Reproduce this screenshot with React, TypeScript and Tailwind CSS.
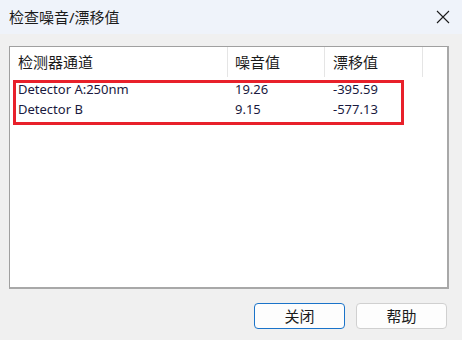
import React from 'react'

type Row = {
  channel: string
  noise: string
  drift: string
}

const rows: Row[] = [
  { channel: 'Detector A:250nm', noise: '19.26', drift: '-395.59' },
  { channel: 'Detector B', noise: '9.15', drift: '-577.13' },
]

const font = { fontFamily: '"Segoe UI", "Noto Sans", "Noto Sans CJK SC", sans-serif' }

const App: React.FC = () => {
  return (
    <div className="w-[462px] h-[340px] bg-[#f0f0f0] flex flex-col text-[#1b1b1b]" style={font}>
      {/* Title bar */}
      <div className="h-[34px] bg-[#eff3fa] flex items-center justify-between pl-[9px] pr-[10px]">
        <span className="text-[15px] leading-none">检查噪音/漂移值</span>
        <svg width="14" height="14" viewBox="0 0 14 14" className="mr-[2px]">
          <path d="M1 1 L13 13 M13 1 L1 13" stroke="#1b1b1b" strokeWidth="1.1" fill="none" />
        </svg>
      </div>

      {/* List */}
      <div className="px-[9px] pt-[12px]">
        <div className="relative w-[440px] h-[243px] bg-white border border-[#a0a0a0] border-r-2 border-b-2 border-r-[#a8a8a8] border-b-[#a8a8a8]">
          <div className="flex h-[30px] items-center">
            <div className="w-[218px] h-full flex items-center pl-[8px] border-r border-[#e5e5e5] text-[15px]">检测器通道</div>
            <div className="w-[97px] h-full flex items-center pl-[7px] border-r border-[#e5e5e5] text-[15px]">噪音值</div>
            <div className="w-[98px] h-full flex items-center pl-[8px] border-r border-[#e5e5e5] text-[15px]">漂移值</div>
          </div>
          <div className="pt-[3px]">
            {rows.map(r => (
              <div key={r.channel} className="flex h-[20px] items-center text-[13px] text-[#1a1a40]">
                <div className="w-[218px] pl-[8px]">{r.channel}</div>
                <div className="w-[97px] pl-[7px]">{r.noise}</div>
                <div className="w-[98px] pl-[8px]">{r.drift}</div>
              </div>
            ))}
          </div>
          {/* annotation box */}
          <div className="absolute left-[3px] top-[33px] w-[391px] h-[45px] border-[3px] border-[#e8202a]" />
        </div>
      </div>

      {/* Buttons */}
      <div className="flex justify-end gap-[11px] pr-[15px] mt-[14px]">
        <button className="w-[91px] h-[26px] rounded-[4px] border-[1.5px] border-[#1a73c9] bg-[#fdfdfd] text-[15px] leading-none">
          关闭
        </button>
        <button className="w-[91px] h-[26px] rounded-[4px] border border-[#d0d0d0] bg-[#fdfdfd] text-[15px] leading-none">
          帮助
        </button>
      </div>
    </div>
  )
}

export default App
